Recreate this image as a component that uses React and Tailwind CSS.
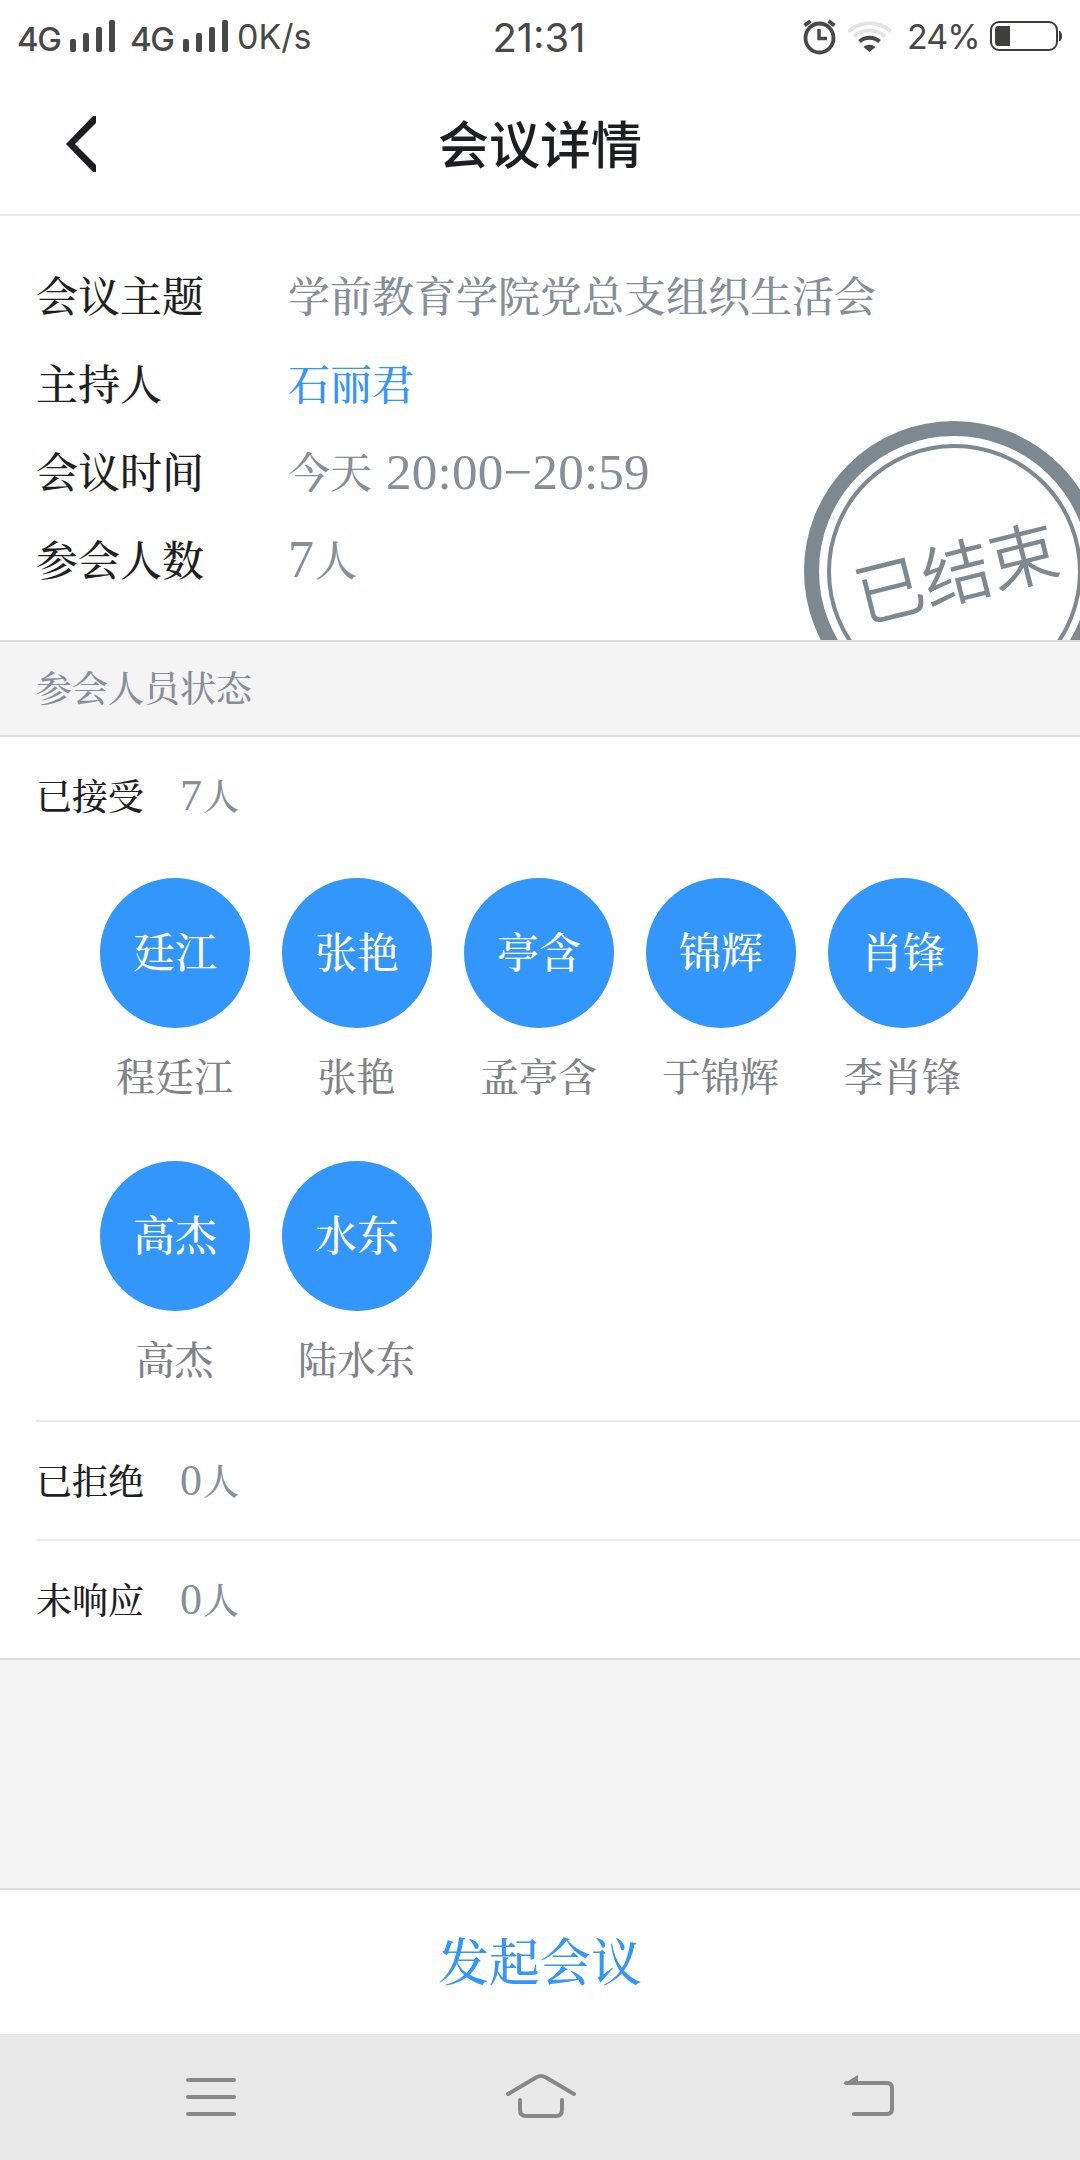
import React from "react";

const serif = "font-['Noto_Serif_CJK_SC','Source_Han_Serif_SC','Noto_Sans_CJK_SC',serif]";
const sans = "font-['Noto_Sans_CJK_SC',sans-serif]";
const digits = "font-['Liberation_Serif',serif] font-normal";

const info = [
  { label: "会议主题", value: "学前教育学院党总支组织生活会" },
  { label: "主持人", value: "石丽君", link: true },
  { label: "会议时间", value: "今天", time: "20:00−20:59" },
  { label: "参会人数", count: "7", value: "人" },
];

const people = [
  ["廷江", "程廷江"],
  ["张艳", "张艳"],
  ["亭含", "孟亭含"],
  ["锦辉", "于锦辉"],
  ["肖锋", "李肖锋"],
  ["高杰", "高杰"],
  ["水东", "陆水东"],
];

function Signal() {
  return (
    <svg className="h-8 w-[45px]" viewBox="0 0 45 32" fill="#484848">
      <rect x="0" y="19" width="6" height="13" rx="2" />
      <rect x="13" y="13" width="6" height="19" rx="2" />
      <rect x="26" y="7" width="6" height="25" rx="2" />
      <rect x="39" y="0" width="6" height="32" rx="2" />
    </svg>
  );
}

function StatusBar() {
  return (
    <div className="grid h-[76px] grid-cols-[1fr_auto_1fr] items-start text-[34px] font-normal leading-[40px] text-[#484848] font-['Inter',sans-serif]">
      <div className="flex pl-[17px] pt-5">
        <span className="-mt-px w-[53px] text-[33px] font-medium leading-[40px] tracking-[-1.5px]">4G</span>
        <Signal />
        <span className="-mt-px ml-[15px] w-[53px] text-[33px] font-medium leading-[40px] tracking-[-1.5px]">4G</span>
        <Signal />
        <span className="-mt-[3px] ml-[9px]">0K/s</span>
      </div>
      <div className="mr-0.5 pt-[18px] text-[40px]">21:31</div>
      <div className="flex justify-end pr-[17px] pt-[17px]">
        <svg className="mt-0.5 h-9 w-[33px] shrink-0" viewBox="0 0 33 36" fill="none" stroke="#484848">
          <ellipse cx="16.500" cy="19" rx="14" ry="14.500" strokeWidth="3.800" />
          <path d="M1.500 6.500 7.500 2M31.500 6.500 25.500 2" strokeWidth="4" />
          <path d="M16 10v9.500h8" strokeWidth="3.500" />
        </svg>
        <svg className="ml-[11px] mt-[3px] h-8 w-[45px] shrink-0" viewBox="0 0 45 32" fill="none" strokeWidth="4">
          <path d="M1.500 11.500a31 31 0 0 1 42 0" stroke="#e4e4e4" />
          <path d="M7 16.500a23 23 0 0 1 31 0" stroke="#e4e4e4" />
          <path d="M12.500 21.500a15 15 0 0 1 20 0" stroke="#484848" />
          <path d="M16.500 27a9 9 0 0 1 12 0L22.500 32Z" fill="#484848" stroke="none" />
        </svg>
        <span className="ml-[15px] w-[83px] whitespace-nowrap tracking-[-1px]">24%</span>
        <svg className="mt-1 h-[30px] w-[73px] shrink-0" viewBox="0 0 73 30">
          <rect x="1" y="1" width="66" height="28" rx="8" fill="none" stroke="#3e3f3a" strokeWidth="2" />
          <path d="M8 5H20V25H8Q5 25 5 21V9Q5 5 8 5Z" fill="#3e3f3a" />
          <path d="M69 9.500q3 1 3 5.500t-3 5.500Z" fill="#3e3f3a" />
        </svg>
      </div>
    </div>
  );
}

function Stamp() {
  return (
    <div className="absolute left-[804px] top-[205px] flex size-[300px] items-center justify-center rounded-full border-[15px] border-[#7e8890]">
      <div className="flex size-[255px] shrink-0 items-center justify-center rounded-full border-4 border-[#7e8890]">
        <span className={`${sans} mb-1 ml-0.5 -rotate-14 whitespace-nowrap text-[69px] font-[350] leading-none text-[#7e8890]`}>已结束</span>
      </div>
    </div>
  );
}

function GroupRow({ title, count }) {
  return (
    <div className="flex h-[119px] items-center pb-1 text-[36px]">
      <span className="w-36 text-[#1f1f1f]">{title}</span>
      <span className="flex items-center text-[#868f99]">
        <span className={`${digits} mr-px mt-[3px] text-[44px]`}>{count}</span>人
      </span>
    </div>
  );
}

export default function App() {
  return (
    <div className={`${serif} flex h-[2160px] w-[1080px] flex-col overflow-hidden bg-white font-medium`}>
      <StatusBar />
      <header className={`${sans} grid h-[140px] grid-cols-[1fr_auto_1fr] items-center border-b-2 border-[#ebebeb] text-[#1b1f24]`}>
        <svg className="mb-0.5 ml-[66px] h-14 w-[30px]" viewBox="0 0 30 56" fill="#1b1f24">
          <path d="M0 28 27 0H30V7L9 28 30 49V56H27Z" />
        </svg>
        <h1 className="pb-[5px] text-[51px] font-medium leading-none">会议详情</h1>
        <span />
      </header>

      <section className="relative h-[424px] overflow-hidden px-9 pt-[34px] text-[42px]">
        {info.map((r) => (
          <div key={r.label} className="flex h-[88px] items-center">
            <span className="w-[252px] text-[#1f1f1f]">{r.label}</span>
            <span className={r.link ? "text-[#3296fa]" : "flex items-center text-[#868f99]"}>
              {r.count && <span className={`${digits} mr-px mt-1 text-[52px]`}>{r.count}</span>}
              {r.value}
              {r.time && <span className={`${digits} ml-[14px] mt-1 text-[51px] tracking-[0.25px]`}>{r.time}</span>}
            </span>
          </div>
        ))}
        <Stamp />
      </section>

      <div className="flex h-[97px] items-center border-y-2 border-[#dedede] bg-[#f4f4f4] px-9 pb-[3px] text-[36px] text-[#868f99]">
        参会人员状态
      </div>

      <section className="pl-9">
        <GroupRow title="已接受" count="7" />
        <div className="flex h-[564px] flex-wrap content-start gap-x-8 gap-y-[53px] pl-16 pt-[22px]">
          {people.map(([short, name]) => (
            <div key={name} className="flex h-[230px] w-[150px] flex-col items-center">
              <div className="flex size-[150px] items-center justify-center rounded-full bg-[#3296fa] pb-[5px] text-[42px] text-white">
                {short}
              </div>
              <span className="mr-px mt-4 whitespace-nowrap text-[39px] leading-[60px] text-[#808488]">{name}</span>
            </div>
          ))}
        </div>
        <div className="border-t-2 border-[#ebebeb]">
          <GroupRow title="已拒绝" count="0" />
        </div>
        <div className="-mt-0.5 border-t-2 border-[#ebebeb]">
          <GroupRow title="未响应" count="0" />
        </div>
      </section>

      <div className="-mt-0.5 flex-1 border-y-2 border-[#dedede] bg-[#f4f4f4]" />
      <button className="h-36 shrink-0 pb-[6px] text-[51px] text-[#3296fa]">发起会议</button>

      <nav className="flex h-[126px] shrink-0 items-center justify-between bg-[#e8e8e8] px-[185px]">
        <svg className="h-[42px] w-[52px]" viewBox="0 0 52 42" fill="none" stroke="#888" strokeWidth="4" strokeLinecap="round">
          <path d="M3 4h46M3 21h46M3 38h46" />
        </svg>
        <svg className="mb-0.5 ml-0.5 h-[46px] w-[72px]" viewBox="0 0 72 46" fill="none" stroke="#888" strokeWidth="4" strokeLinecap="round">
          <path d="M3 21 31 4.500q5-3 10 0L69 21" />
          <path d="M15 27v10q0 6 6 6h30q6 0 6-6V27" />
        </svg>
        <svg className="mr-px h-[44px] w-[52px]" viewBox="0 -1 52 44" fill="none" stroke="#888" strokeWidth="4" strokeLinecap="round">
          <path d="M4 7h41q5 0 5 5v21q0 5-5 5H12" />
          <path d="M1 8 16-1v8Z" fill="#888" stroke="none" />
        </svg>
      </nav>
    </div>
  );
}
